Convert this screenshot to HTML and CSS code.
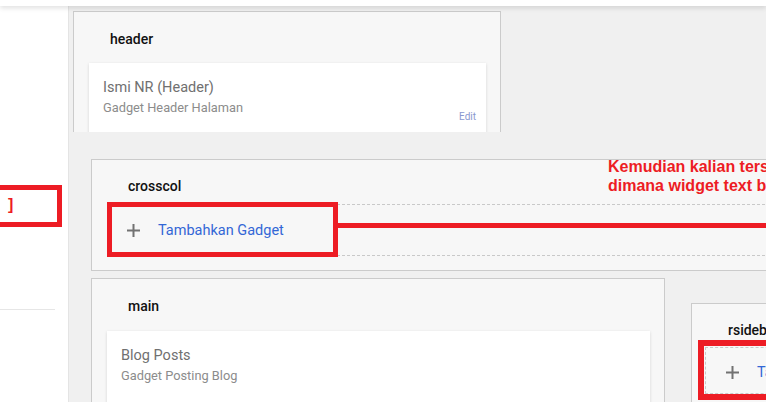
FILE: index.html
```html
<!DOCTYPE html>
<html lang="id">
<head>
<meta charset="utf-8">
<title>Tata Letak</title>
<link rel="stylesheet" href="styles.css">
</head>
<body>
<div class="topbar"></div>
<div class="app">
  <aside class="sidebar">
    <div class="side-sep"></div>
  </aside>
  <main class="canvas">
    <div class="header-wrap">
      <section class="sec sec-header">
        <div class="sec-title">header</div>
        <div class="card card-header">
          <div class="card-text">
            <div class="card-name">Ismi NR (Header)</div>
            <div class="card-desc">Gadget Header Halaman</div>
          </div>
          <a class="card-edit">Edit</a>
        </div>
      </section>
    </div>

    <section class="sec sec-crosscol">
      <div class="sec-title">crosscol</div>
      <div class="add">
        <svg class="plus" width="13" height="13" viewBox="0 0 13 13"><path d="M6.5 0v13M0 6.5h13" stroke="#727272" stroke-width="2" fill="none"/></svg>
        <span class="add-label">Tambahkan Gadget</span>
      </div>
    </section>

    <div class="row">
      <section class="sec sec-main">
        <div class="sec-title">main</div>
        <div class="card card-main">
          <div class="card-text">
            <div class="card-name">Blog Posts</div>
            <div class="card-desc">Gadget Posting Blog</div>
          </div>
        </div>
      </section>
      <section class="sec sec-side">
        <div class="sec-title">rsidebar</div>
        <div class="add add-side">
          <svg class="plus" width="13" height="13" viewBox="0 0 13 13"><path d="M6.5 0v13M0 6.5h13" stroke="#727272" stroke-width="2" fill="none"/></svg>
          <span class="add-label">Tambahkan Gadget</span>
        </div>
      </section>
    </div>
  </main>
</div>

<div class="mark mark-left"><span class="mark-bracket">]</span></div>
<div class="mark mark-cross"></div>
<div class="mark-line"></div>
<div class="note">Kemudian kalian tersebut klik<br>dimana widget text berada</div>
<div class="mark mark-side"></div>
</body>
</html>
```

FILE: styles.css
```css
html, body {
  margin: 0;
  padding: 0;
}
body {
  width: 766px;
  height: 402px;
  overflow: hidden;
  position: relative;
  background: #f0f0f0;
  font-family: Roboto, "Noto Sans", Arial, sans-serif;
}
.topbar {
  height: 6px;
  background: #fff;
  box-shadow: 0 2px 5px rgba(0, 0, 0, 0.13);
  position: relative;
  z-index: 2;
}
.app {
  display: flex;
  height: 396px;
}
.sidebar {
  width: 69px;
  flex: none;
  background: #fff;
  border-right: 1px solid #e4e4e4;
  padding-top: 303px;
  box-sizing: border-box;
}
.side-sep {
  width: 55px;
  height: 1px;
  background: #e6e6e6;
}
.canvas {
  flex: 1;
  background: #f0f0f0;
  overflow: hidden;
  min-width: 0;
}
.sec {
  box-sizing: border-box;
  background: #f7f7f7;
  border: 1px solid #cbcbcb;
}
.sec-title {
  font-size: 14px;
  font-weight: 500;
  line-height: 20px;
  color: #111;
  margin-left: 36px;
}
.header-wrap {
  margin: 5px 0 0 4px;
  width: 428px;
  height: 121px;
  overflow: hidden;
}
.sec-header {
  height: 200px;
  padding: 16.5px 14px 0 15px;
}
.sec-header .sec-title {
  margin-left: 21px;
  margin-bottom: 14.5px;
}
.card {
  background: #fff;
  box-shadow: 0 1px 3px rgba(0, 0, 0, 0.14);
  padding: 14.5px 10px 10px 14px;
  display: flex;
  justify-content: space-between;
}
.card-header {
  height: 100px;
  box-sizing: border-box;
}
.card-name {
  font-size: 14.5px;
  line-height: 20px;
  color: #707070;
}
.card-desc {
  font-size: 12.8px;
  line-height: 18px;
  margin-top: 1.5px;
  color: #8c8c8c;
}
.card-edit {
  align-self: flex-start;
  font-size: 10px;
  line-height: 12px;
  color: #8a98cf;
  margin-top: 33px;
}
.sec-crosscol {
  margin: 27px 0 0 22px;
  width: 760px;
  height: 112px;
  padding: 16px 0 0 15px;
}
.sec-crosscol .sec-title {
  margin-left: 21px;
  margin-bottom: 8px;
}
.add {
  box-sizing: border-box;
  height: 52px;
  border: 1px dashed #c9c9c9;
  border-right: none;
  display: flex;
  align-items: center;
  padding-left: 19px;
  gap: 18px;
}
.plus {
  flex: none;
}
.add-label {
  font-size: 14.5px;
  color: #3367d6;
  white-space: nowrap;
}
.row {
  display: flex;
  align-items: flex-start;
  margin-top: 7px;
}
.sec-main {
  margin-left: 22px;
  width: 574px;
  flex: none;
  height: 200px;
  padding: 17px 14px 0 15px;
}
.sec-main .sec-title {
  margin-left: 21px;
  margin-bottom: 15px;
}
.card-main {
  height: 120px;
  box-sizing: border-box;
}
.sec-side {
  margin: 25px 0 0 26px;
  width: 200px;
  flex: none;
  height: 200px;
  padding: 15.5px 0 0 13px;
}
.sec-side .sec-title {
  margin-left: 23px;
  margin-bottom: 7px;
}
.add-side {
  height: 47px;
  padding-left: 20px;
  padding-top: 5px;
}
.mark {
  position: absolute;
  box-sizing: border-box;
  border: 5px solid #ed1c24;
}
.mark-left {
  left: -10px;
  top: 185px;
  width: 72px;
  height: 42px;
  font: bold 16px "Liberation Sans", Arial, sans-serif;
  color: #ed1c24;
  padding-left: 13px;
  line-height: 30px;
}
.mark-cross {
  left: 107px;
  top: 202px;
  width: 231px;
  height: 55px;
}
.mark-line {
  position: absolute;
  left: 338px;
  top: 223px;
  width: 428px;
  height: 5px;
  background: #ed1c24;
}
.note {
  position: absolute;
  left: 608px;
  top: 157px;
  font: bold 16px/19px "Liberation Sans", Arial, sans-serif;
  color: #ed1c24;
  white-space: nowrap;
}
.mark-side {
  left: 698px;
  top: 340px;
  width: 100px;
  height: 60px;
  border-width: 6px;
}
```
